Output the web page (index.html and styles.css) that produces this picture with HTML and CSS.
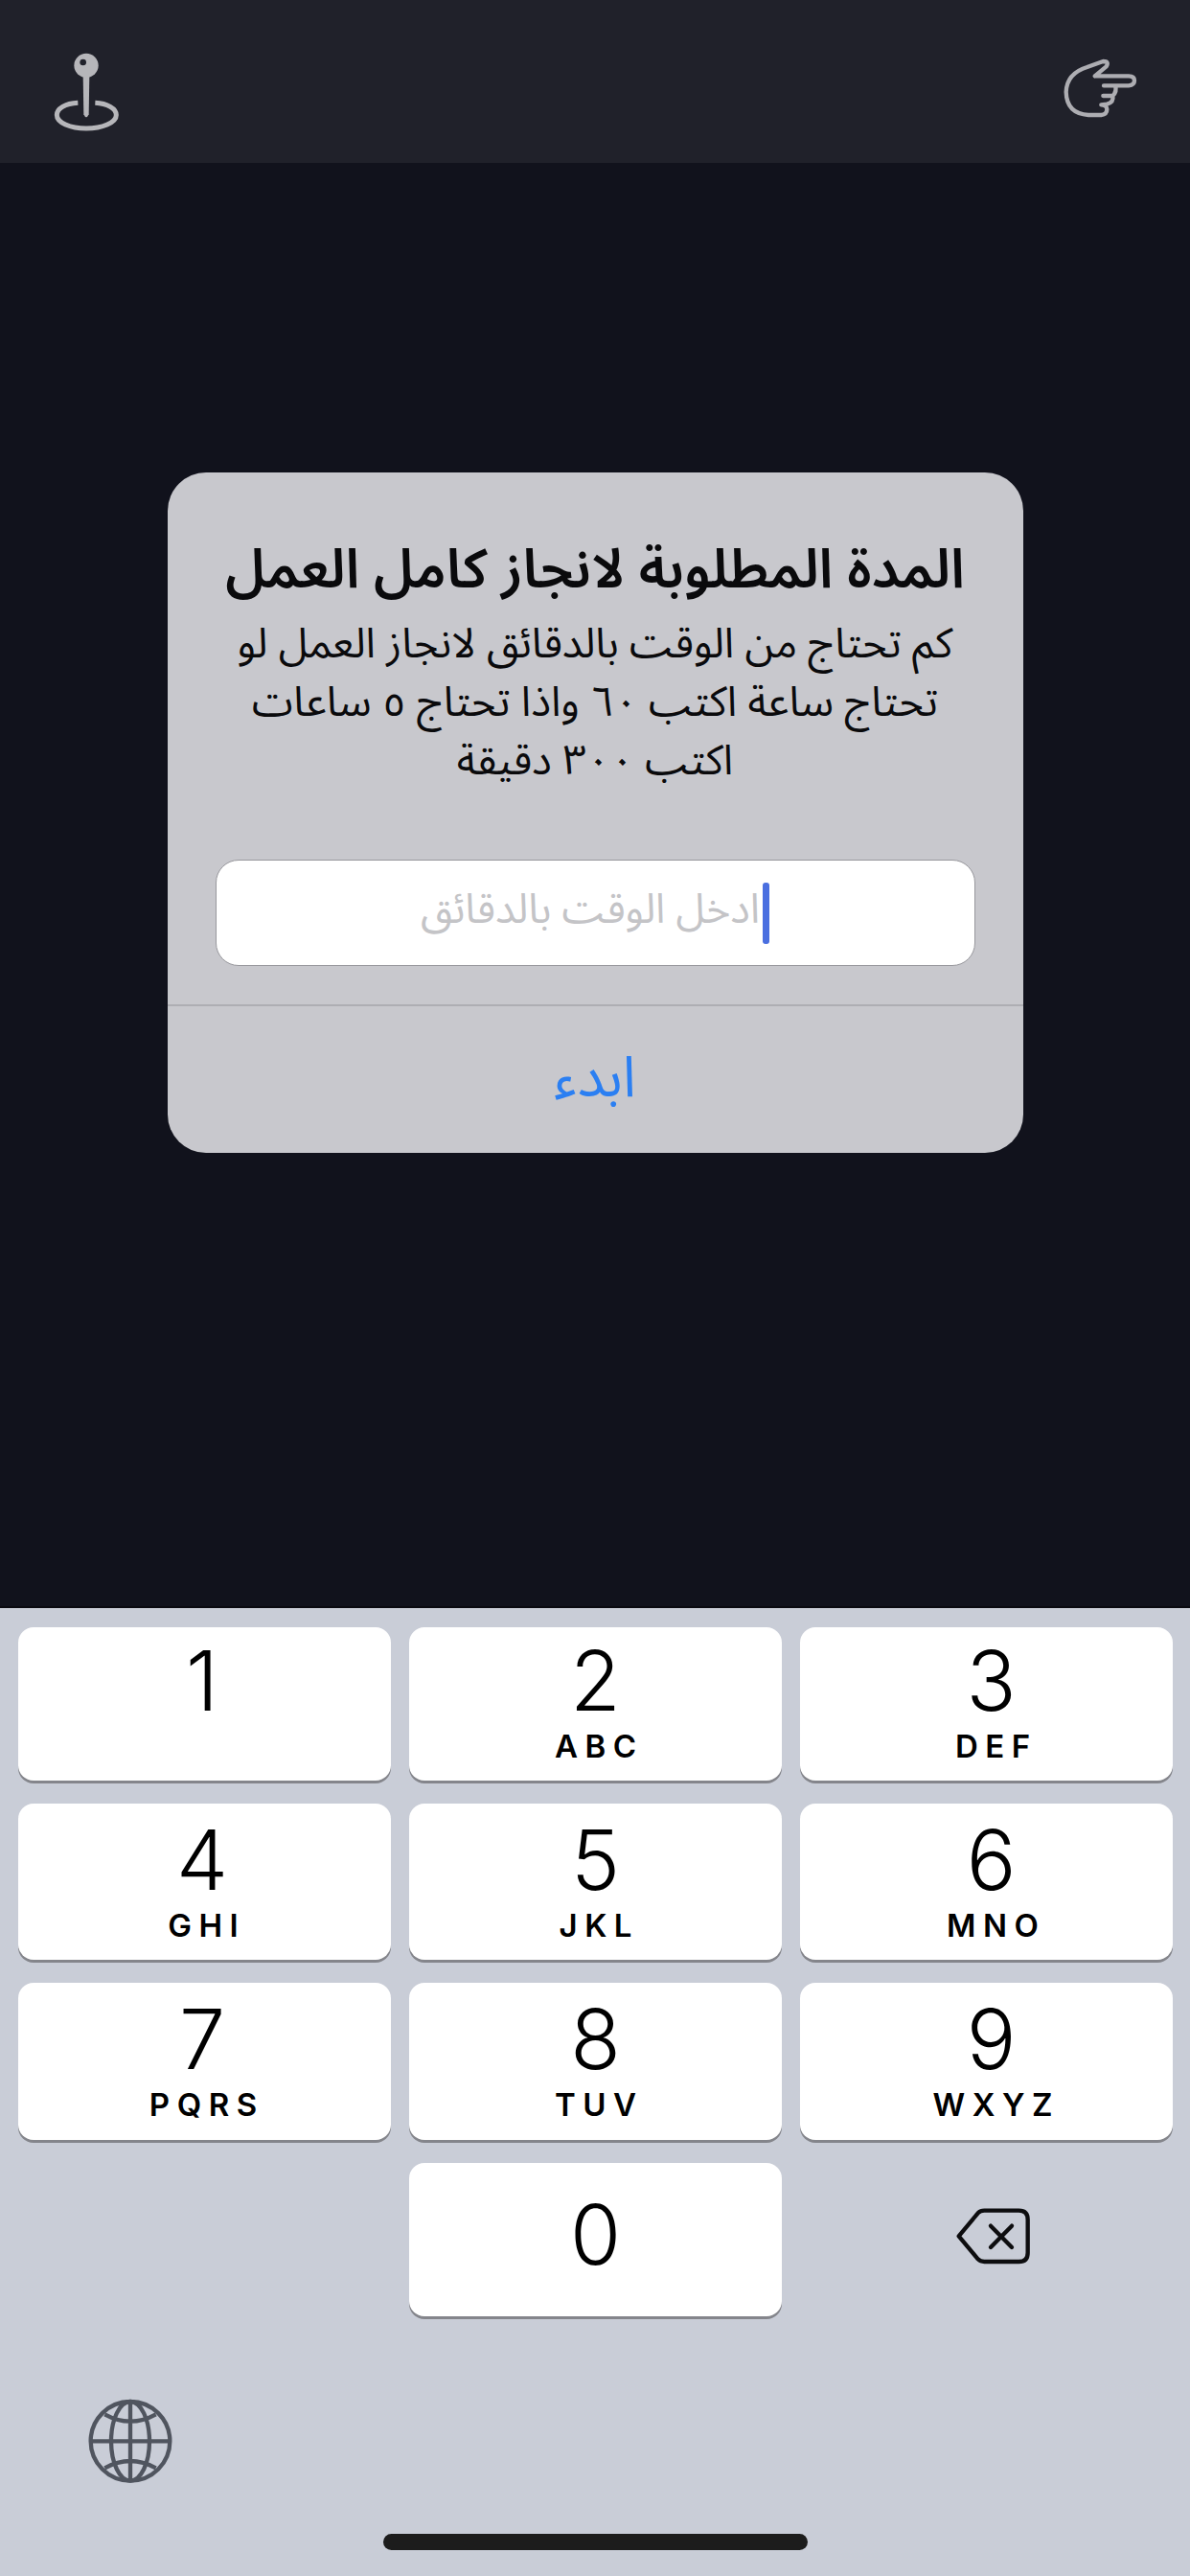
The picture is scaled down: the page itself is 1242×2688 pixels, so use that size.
FILE: index.html
```html
<!DOCTYPE html>
<html lang="ar">
<head>
<meta charset="utf-8">
<title>Timer</title>
<link rel="stylesheet" href="styles.css">
</head>
<body>
<div class="screen">
  <header class="topbar">
    <svg class="icon-pin" viewBox="0 0 300 330" aria-hidden="true">
      <circle class="pin-head" cx="150" cy="85" r="38"/>
      <circle class="pin-hole" cx="140" cy="75" r="10"/>
      <path class="pin-fill" d="M140 115 L160 115 L158 238 Q150 256 142 238 Z"/>
      <path class="pin-ring" d="M124 202 C84 204 58 220 58 240 C58 264 100 282 150 282 C200 282 244 264 244 240 C244 220 216 204 178 202"/>
    </svg>
    <svg class="icon-hand" viewBox="0 0 330 300" aria-hidden="true">
      <path d="M152 118 L188 88 Q198 72 178 72 L128 90 Q64 110 62 168 Q64 236 132 240 L172 240 Q190 238 190 222 Q190 210 172 208 M172 208 L190 206 Q212 200 208 180 L178 180 M208 180 Q222 166 216 148 L180 148 M180 148 L258 148 Q276 146 276 132 Q276 118 258 118 L152 118"/>
    </svg>
  </header>

  <main class="stage">
    <section class="alert" dir="rtl">
      <div class="alert-body">
        <h1 class="alert-title">المدة المطلوبة لانجاز كامل العمل</h1>
        <p class="alert-text">كم تحتاج من الوقت بالدقائق لانجاز العمل لو<br>تحتاج ساعة اكتب ٦٠ واذا تحتاج ٥ ساعات<br>اكتب ٣٠٠ دقيقة</p>
        <div class="field">
          <span class="caret"></span>
          <span class="placeholder">ادخل الوقت بالدقائق</span>
        </div>
      </div>
      <div class="alert-action">ابدء</div>
    </section>
  </main>

  <section class="keyboard">
    <div class="keys">
      <div class="key key-left"><span class="digit">1</span></div>
      <div class="key"><span class="digit">2</span><span class="letters">ABC</span></div>
      <div class="key key-right"><span class="digit">3</span><span class="letters">DEF</span></div>
      <div class="key key-left key-low"><span class="digit">4</span><span class="letters">GHI</span></div>
      <div class="key key-low"><span class="digit">5</span><span class="letters">JKL</span></div>
      <div class="key key-right key-low"><span class="digit">6</span><span class="letters">MNO</span></div>
      <div class="key key-left key-low"><span class="digit">7</span><span class="letters">PQRS</span></div>
      <div class="key key-low"><span class="digit">8</span><span class="letters">TUV</span></div>
      <div class="key key-right key-low"><span class="digit">9</span><span class="letters">WXYZ</span></div>
      <div class="key-blank"></div>
      <div class="key key-solo"><span class="digit">0</span></div>
      <div class="key-delete">
        <svg class="icon-delete" viewBox="0 0 330 270" aria-hidden="true">
          <path d="M142 50 L250 50 Q278 50 278 78 L278 182 Q278 210 250 210 L142 210 Q130 210 122 202 L62 130 L122 58 Q130 50 142 50 Z"/>
          <path d="M162 98 L228 165 M228 98 L162 165"/>
        </svg>
      </div>
    </div>
    <div class="kb-footer">
      <svg class="icon-globe" viewBox="0 0 330 330" aria-hidden="true">
        <circle cx="168" cy="172" r="124"/>
        <ellipse cx="168" cy="172" rx="60" ry="124"/>
        <path d="M168 48 V296 M44 172 H292 M88 88 Q168 132 248 88 M88 256 Q168 212 248 256"/>
      </svg>
    </div>
    <div class="home-bar"></div>
  </section>
</div>
</body>
</html>
```
FILE: styles.css
```css
* { box-sizing: border-box; margin: 0; padding: 0; }
html, body { width: 1242px; height: 2688px; overflow: hidden; }
body { background: #11121c; font-family: "Noto Sans Arabic", "DejaVu Sans", sans-serif; }
.screen { width: 1242px; height: 2688px; display: flex; flex-direction: column; }

.topbar {
  height: 170px; flex: none; background: #20212a;
  display: flex; justify-content: space-between; align-items: flex-start;
  padding: 40px 40px 0 40px;
}
.icon-pin { width: 100px; height: 110px; }
.icon-hand { width: 110px; height: 100px; }
.pin-head, .pin-fill { fill: #b6b6ba; }
.pin-hole { fill: #20212a; }
.pin-ring { fill: none; stroke: #b6b6ba; stroke-width: 15; }
.icon-hand path { fill: none; stroke: #adadb2; stroke-width: 13; stroke-linejoin: round; stroke-linecap: round; }

.stage { flex: 1; display: flex; justify-content: center; align-items: flex-start; padding-top: 323px; }
.alert {
  width: 893px; height: 710px; background: #c8c8cd; border-radius: 40px;
  display: flex; flex-direction: column; color: #0a0a0c;
}
.alert-body { height: 557px; padding: 67px 50px 0; border-bottom: 2px solid #aeaeb3; text-align: center; }
.alert-title { font-size: 57px; font-weight: 600; line-height: 70px; white-space: nowrap; }
.alert-text { font-size: 43.5px; font-weight: 400; line-height: 61px; margin-top: 12px; white-space: nowrap; }
.field {
  height: 111px; margin-top: 72px; background: #fff; border: 1px solid #97979c; border-radius: 24px;
  display: flex; justify-content: center; align-items: center; gap: 3px;
}
.caret { width: 7px; height: 64px; background: #4a6fe0; border-radius: 3px; }
.placeholder { font-size: 43px; line-height: 64px; color: #c4c4c7; white-space: nowrap; padding-bottom: 6px; }
.alert-action { flex: 1; display: flex; justify-content: center; align-items: center; font-size: 59px; color: #2b7ff2; padding-bottom: 2px; }

.keyboard {
  height: 1012px; flex: none; background: #c9cdd7; border-top: 2px solid #0a0a10;
  padding: 20px 19px 0; display: flex; flex-direction: column;
  font-family: Inter, "Liberation Sans", sans-serif;
}
.keys { display: grid; grid-template-columns: repeat(3, 389px); grid-template-rows: 160px 163px 164px 160px; column-gap: 19px; row-gap: 24px; }
.key {
  background: #fff; border-radius: 16px; box-shadow: 0 3px 0 #84858b;
  display: flex; flex-direction: column; align-items: center; color: #000;
}
.key-left { padding-right: 5px; }
.key-left .letters { margin-left: 2px; }
.key-right { padding-left: 10px; }
.key-right .letters { margin-left: 3px; }
.key-solo { justify-content: center; padding-bottom: 10px; }
.key-solo .digit { margin-top: 0; }
.digit { font-size: 86px; font-weight: 300; line-height: 86px; margin-top: 13px; }
.key-low .digit { margin-top: 16px; }
.letters { font-size: 33px; font-weight: 600; line-height: 34px; letter-spacing: 7.5px; margin-right: -7.5px; margin-top: 8px; }
.key-delete { display: flex; justify-content: center; align-items: flex-start; padding: 33px 0 0 11px; }
.icon-delete { width: 110px; height: 90px; }
.icon-delete path { fill: none; stroke: #0d0d0f; stroke-width: 13; stroke-linejoin: round; stroke-linecap: round; }
.kb-footer { padding: 73px 0 0 61px; height: 227px; flex: none; }
.icon-globe { width: 110px; height: 110px; display: block; }
.icon-globe circle, .icon-globe ellipse, .icon-globe path { fill: none; stroke: #50555f; stroke-width: 13; }
.home-bar { width: 443px; height: 17px; background: #1c1c1c; border-radius: 9px; align-self: center; }
```
